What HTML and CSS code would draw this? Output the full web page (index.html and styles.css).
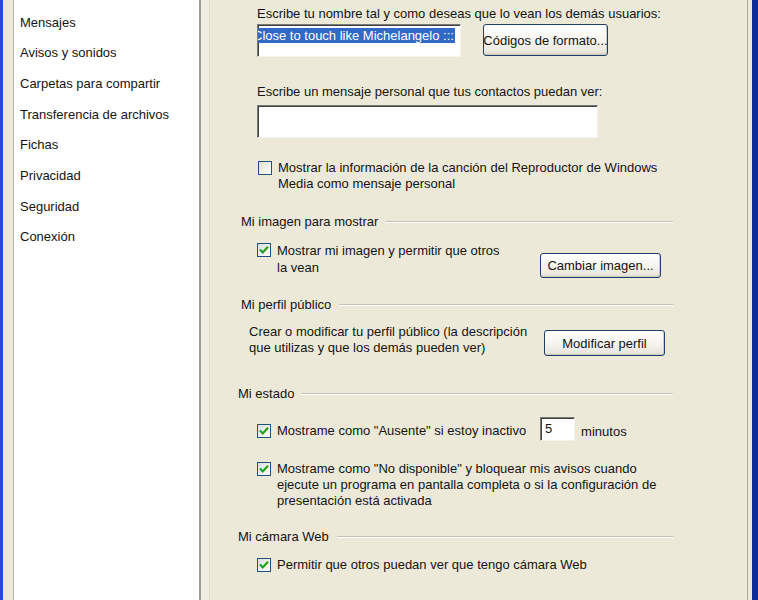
FILE: index.html
```html
<!DOCTYPE html>
<html lang="es">
<head>
<meta charset="utf-8">
<title>Opciones - Personal</title>
<link rel="stylesheet" href="styles.css">
</head>
<body>
<div class="window">
  <div class="list">
    <div class="list-item">Mensajes</div>
    <div class="list-item">Avisos y sonidos</div>
    <div class="list-item">Carpetas para compartir</div>
    <div class="list-item">Transferencia de archivos</div>
    <div class="list-item">Fichas</div>
    <div class="list-item">Privacidad</div>
    <div class="list-item">Seguridad</div>
    <div class="list-item">Conexión</div>
  </div>
  <div class="main">
    <div class="label label-1">Escribe tu nombre tal y como deseas que lo vean los demás usuarios:</div>
    <div class="name-row">
      <div class="textbox name-box"><span class="selected">Close to touch like Michelangelo :::</span></div>
      <div class="btn btn-format">Códigos de formato...</div>
    </div>
    <div class="label label-2">Escribe un mensaje personal que tus contactos puedan ver:</div>
    <div class="textbox msg-box"></div>
    <div class="cb-row cb-media">
      <span class="cb"></span>
      <span class="cb-text">Mostrar la información de la canción del Reproductor de Windows<br>Media como mensaje personal</span>
    </div>

    <div class="heading h-img"><span>Mi imagen para mostrar</span><i class="rule"></i></div>
    <div class="img-row">
      <div class="cb-row cb-img">
        <span class="cb checked"><svg viewBox="0 0 14 14" width="14" height="14"><path d="M3 6.5 L5.8 9.4 L11 3.8" fill="none" stroke="#21a121" stroke-width="2.2"/></svg></span>
        <span class="cb-text">Mostrar mi imagen y permitir que otros<br>la vean</span>
      </div>
      <div class="btn btn-img">Cambiar imagen...</div>
    </div>

    <div class="heading h-perfil"><span>Mi perfil público</span><i class="rule"></i></div>
    <div class="perfil-row">
      <div class="perfil-text">Crear o modificar tu perfil público (la descripción<br>que utilizas y que los demás pueden ver)</div>
      <div class="btn btn-perfil">Modificar perfil</div>
    </div>

    <div class="heading h-estado"><span>Mi estado</span><i class="rule"></i></div>
    <div class="cb-row estado-1">
      <span class="cb checked"><svg viewBox="0 0 14 14" width="14" height="14"><path d="M3 6.5 L5.8 9.4 L11 3.8" fill="none" stroke="#21a121" stroke-width="2.2"/></svg></span>
      <span class="cb-text">Mostrame como "Ausente" si estoy inactivo</span>
      <div class="textbox num-box">5</div>
      <span class="minutes">minutos</span>
    </div>
    <div class="cb-row estado-2">
      <span class="cb checked"><svg viewBox="0 0 14 14" width="14" height="14"><path d="M3 6.5 L5.8 9.4 L11 3.8" fill="none" stroke="#21a121" stroke-width="2.2"/></svg></span>
      <span class="cb-text">Mostrame como "No disponible" y bloquear mis avisos cuando<br>ejecute un programa en pantalla completa o si la configuración de<br>presentación está activada</span>
    </div>

    <div class="heading h-cam"><span>Mi cámara Web</span><i class="rule"></i></div>
    <div class="cb-row cam-row">
      <span class="cb checked"><svg viewBox="0 0 14 14" width="14" height="14"><path d="M3 6.5 L5.8 9.4 L11 3.8" fill="none" stroke="#21a121" stroke-width="2.2"/></svg></span>
      <span class="cb-text">Permitir que otros puedan ver que tengo cámara Web</span>
    </div>
  </div>
</div>
</body>
</html>
```

FILE: styles.css
```css
* { box-sizing: border-box; }
html, body { margin: 0; padding: 0; }
body {
  height: 600px;
  overflow: hidden;
  background: #ece9d8;
  font-family: "Liberation Sans", Arial, sans-serif;
  font-size: 13px;
  color: #141414;
}
.window {
  display: flex;
  width: 758px;
  height: 600px;
  background: #ece9d8;
  border-left: 3px solid #1f4fcf;
  border-right: 6px solid #0c2c9a;
  padding-left: 10px;
  padding-right: 4px;
}
.list {
  flex: none;
  width: 188px;
  background: #fff;
  border-left: 1px solid #b9b6a8;
  border-right: 2px solid #9c9c98;
  padding-top: 7.6px;
  padding-left: 6px;
}
.list-item {
  height: 30.7px;
  line-height: 30.7px;
  white-space: nowrap;
}
.main {
  flex: 1 1 0;
  min-width: 0;
  overflow: hidden;
  display: flex;
  flex-direction: column;
  border-left: 8px solid #f1efe4;
  border-right: 1px solid #aca899;
  position: relative;
}
.main::before {
  content: "";
  position: absolute;
  left: 0;
  top: 0;
  bottom: 0;
  width: 1px;
  background: #dcdacb;
}

.label, .cb-row, .heading, .perfil-row, .img-row, .name-row, .textbox { flex: none; }
.label { line-height: 16px; margin-left: 48px; white-space: nowrap; }
.label-1 { margin-top: 6px; }
.label-2 { margin-top: 27px; }

.textbox {
  background: #fff;
  border-top: 1px solid #7a7a7a;
  border-left: 1px solid #7a7a7a;
  border-right: 1px solid #f4f3ee;
  border-bottom: 1px solid #f4f3ee;
  box-shadow: inset 1px 1px 0 #404040;
}
.name-row {
  display: flex;
  margin-top: 2px;
  margin-left: 48px;
  height: 33px;
}
.name-box {
  width: 204px;
  height: 33px;
  overflow: hidden;
  white-space: nowrap;
  padding: 3px 0 0 1px;
}
.selected {
  display: inline-block;
  background: #3169c6;
  color: #fff;
  line-height: 15px;
  height: 15px;
  margin-left: -6px;
  padding-right: 1px;
}
.msg-box {
  margin-top: 5px;
  margin-left: 48px;
  width: 341px;
  height: 33px;
}

.btn {
  flex: none;
  display: flex;
  align-items: center;
  justify-content: center;
  border: 1px solid #1f3f6b;
  border-radius: 3px;
  background: linear-gradient(to bottom, #ffffff 0%, #f6f5ef 50%, #e9e7dd 90%, #d6d2c2 100%);
  box-shadow: inset -1px -1px 0 #cfcbbd;
  color: #141414;
  white-space: nowrap;
}
.btn-format { width: 125px; height: 32px; margin-left: 22px; }
.btn-img { width: 121px; height: 25px; margin-top: 11px; }
.btn-perfil { width: 121px; height: 26px; margin-top: 6px; }

.cb-row {
  display: flex;
  align-items: flex-start;
  margin-left: 48px;
  line-height: 16px;
  white-space: nowrap;
}
.cb {
  flex: none;
  width: 14px;
  height: 14px;
  margin-top: 1px;
  margin-right: 6px;
  border: 1px solid #1c5180;
  background: linear-gradient(135deg, #dcdcd4 0%, #f3f3ef 60%, #ffffff 100%);
  position: relative;
}
.cb svg { position: absolute; left: -1px; top: -1px; }
.cb-media { margin-top: 22px; margin-left: 49px; }

.heading {
  display: flex;
  align-items: center;
  line-height: 16px;
  margin-right: 74px;
  white-space: nowrap;
}
.heading .rule {
  flex: 1;
  height: 2px;
  margin-left: 8px;
  border-top: 1px solid #c4c1b2;
  border-bottom: 1px solid #ffffff;
}
.h-img { margin-top: 22px; margin-left: 32px; }
.h-perfil { margin-top: 19px; margin-left: 32px; }
.h-estado { margin-top: 30px; margin-left: 29px; }
.h-cam { margin-top: 20px; margin-left: 29px; }

.img-row {
  display: flex;
  margin-top: 12px;
  margin-left: 48px;
}
.cb-img { margin-left: 0; width: 283px; line-height: 17px; }

.perfil-row {
  display: flex;
  margin-top: 11px;
  margin-left: 40px;
}
.perfil-text { width: 295px; line-height: 16px; white-space: nowrap; }

.estado-1 {
  margin-top: 15px;
  align-items: center;
  height: 24px;
}
.estado-1 .cb { margin-top: 4px; }
.estado-1 .cb-text { padding-top: 4px; }
.num-box {
  width: 35px;
  height: 24px;
  margin-left: 14px;
  padding: 2px 0 0 4px;
  line-height: 18px;
}
.minutes { margin-left: 6px; padding-top: 5px; }
.estado-2 { margin-top: 20px; }
.cam-row { margin-top: 12px; }
```
